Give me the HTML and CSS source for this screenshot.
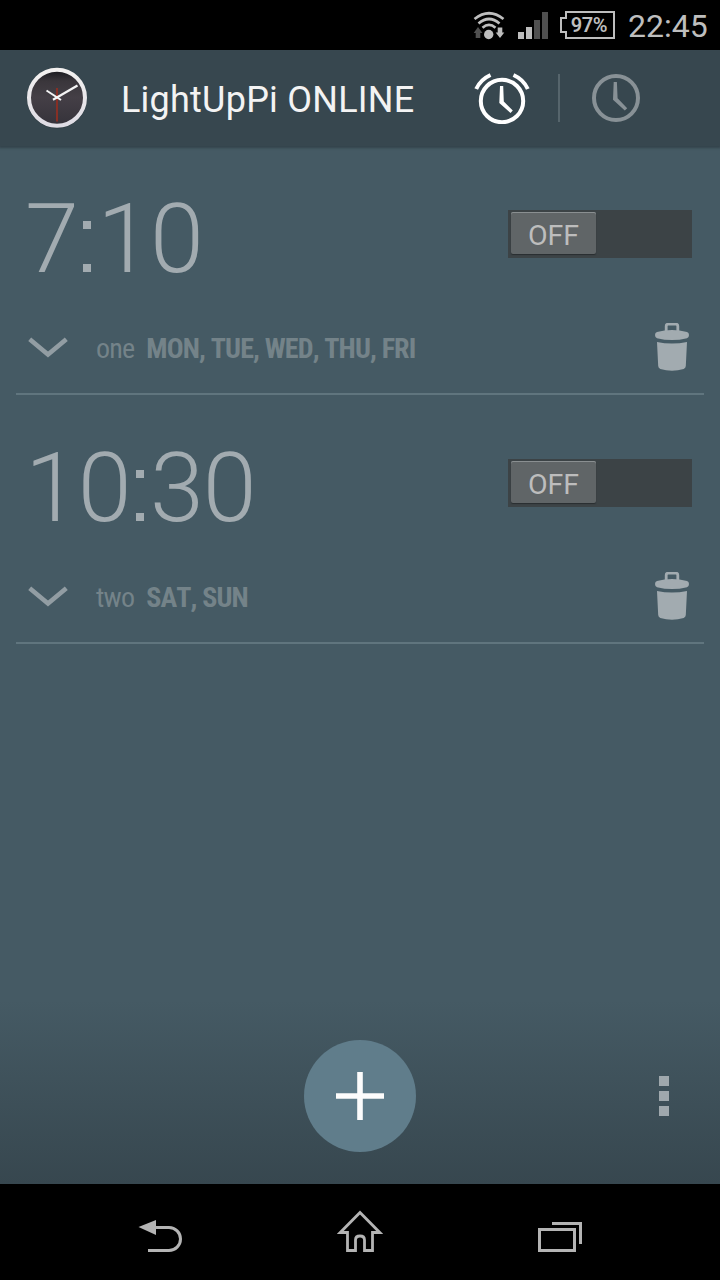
FILE: index.html
```html
<!DOCTYPE html>
<html lang="en">
<head>
<meta charset="utf-8">
<title>LightUpPi</title>
<link rel="stylesheet" href="styles.css">
</head>
<body>
<div class="screen">
  <div class="status">
    <svg class="wifi" width="32" height="30" viewBox="0 0 32 30">
      <g fill="none" stroke="#bebebe" stroke-width="2.7">
        <path d="M1.500 8Q16 -3.500 30.500 8"/>
        <path d="M5.500 12.500Q16 3.500 26.500 12.500"/>
        <path d="M9.500 16.700Q16 11 22.500 16.700"/>
      </g>
      <circle cx="15.700" cy="23.500" r="4.700" fill="#bebebe"/>
      <path d="M5 16 9.500 22H7.300V27H2.700V22H.700z" fill="#505050"/>
      <path d="M24.700 16.500H29.300V21.500H31.300L27 27 22.700 21.500H24.700z" fill="#bebebe"/>
    </svg>
    <svg class="signal" width="30" height="28" viewBox="0 0 30 28">
      <path d="M0 20h6v7H0zM8 15h6v12H8z" fill="#bebebe"/>
      <path d="M16 8h6v19h-6zM24 0h6v27h-6z" fill="#505050"/>
    </svg>
    <div class="battery">
      <svg width="55" height="28" viewBox="0 0 55 28"><path d="M6 1H54V27H6V21H1V7H6z" fill="none" stroke="#bebebe" stroke-width="2"/></svg>
      <span class="percent">97%</span>
    </div>
    <span class="time">22:45</span>
  </div>

  <div class="header">
    <svg class="logo" width="64" height="64" viewBox="0 0 64 64">
      <defs>
        <linearGradient id="face" x1="0" y1="0" x2="0" y2="1"><stop offset="0" stop-color="#17171c"/><stop offset=".2" stop-color="#3a363b"/><stop offset=".5" stop-color="#443f46"/><stop offset="1" stop-color="#35323a"/></linearGradient>
        <linearGradient id="rim" x1="0" y1="0" x2="0" y2="1"><stop offset="0" stop-color="#f3f1f0"/><stop offset="1" stop-color="#dedce4"/></linearGradient>
      </defs>
      <circle cx="32" cy="32.500" r="30" fill="#2c393f"/>
      <circle cx="32" cy="31.700" r="28" fill="url(#face)" stroke="url(#rim)" stroke-width="4"/>
      <path d="M32 22V55.500" stroke="#872f25" stroke-width="2"/>
      <path d="M21.500 24.500 36 34" stroke="#f5f5f5" stroke-width="2"/>
      <path d="M28 33.700 52.500 19.500" stroke="#f5f5f5" stroke-width="2.200"/>
    </svg>
    <h1 class="title">LightUpPi ONLINE</h1>
    <svg class="alarm-tab" width="56" height="52" viewBox="0 0 56 52">
      <g fill="none" stroke="#fff" stroke-width="4">
        <circle cx="28" cy="29" r="21.200"/>
        <path d="M2.200 17Q6.500 7.500 16.500 3M39.500 3Q49.500 7.500 53.800 17"/>
      </g>
      <path d="M26 14h3.200L29.800 29.500 38.800 38.500 36.500 41 25.300 31z" fill="#fff"/>
    </svg>
    <div class="separator"></div>
    <svg class="clock-tab" width="48" height="48" viewBox="0 0 48 48">
      <circle cx="24" cy="24" r="22" fill="none" stroke="#889196" stroke-width="4"/>
      <path d="M21.700 8h3.200L25.600 24.300 35.200 34.200 32.800 36.600 21 25.800z" fill="#889196"/>
    </svg>
  </div>

  <div class="alarms">
    <div class="alarm">
      <div class="alarm-top">
        <span class="alarm-time">7<span class="colon">:</span>10</span>
        <div class="switch"><span class="thumb">OFF</span></div>
      </div>
      <div class="alarm-info">
        <svg class="chevron" width="40" height="22" viewBox="0 0 40 22"><path d="M1.700 2.200 20 17.500 38.300 2.200" fill="none" stroke="#929da3" stroke-width="4.600"/></svg>
        <span class="name">one</span><span class="days">MON, TUE, WED, THU, FRI</span>
        <svg class="trash" width="34" height="48" viewBox="0 0 34 48"><path d="M11.200 9V3Q11.200 1.200 13 1.200H21Q22.800 1.200 22.800 3V9" fill="none" stroke="#a2abb0" stroke-width="2.800"/><path d="M0 12Q0 9.500 2 9Q17 5 32 9Q34 9.500 34 12Q34 14.700 32 15.200Q17 19 2 15.200Q0 14.700 0 12zM2 19Q17 22 32 19L30.800 43Q30.700 45 28.700 46Q17 49.300 5.300 46Q3.300 45 3.200 43z" fill="#a2abb0"/></svg>
      </div>
    </div>
    <div class="alarm">
      <div class="alarm-top">
        <span class="alarm-time">10<span class="colon">:</span>30</span>
        <div class="switch"><span class="thumb">OFF</span></div>
      </div>
      <div class="alarm-info">
        <svg class="chevron" width="40" height="22" viewBox="0 0 40 22"><path d="M1.700 2.200 20 17.500 38.300 2.200" fill="none" stroke="#929da3" stroke-width="4.600"/></svg>
        <span class="name">two</span><span class="days">SAT, SUN</span>
        <svg class="trash" width="34" height="48" viewBox="0 0 34 48"><path d="M11.200 9V3Q11.200 1.200 13 1.200H21Q22.800 1.200 22.800 3V9" fill="none" stroke="#a2abb0" stroke-width="2.800"/><path d="M0 12Q0 9.500 2 9Q17 5 32 9Q34 9.500 34 12Q34 14.700 32 15.200Q17 19 2 15.200Q0 14.700 0 12zM2 19Q17 22 32 19L30.800 43Q30.700 45 28.700 46Q17 49.300 5.300 46Q3.300 45 3.200 43z" fill="#a2abb0"/></svg>
      </div>
    </div>
  </div>

  <div class="actions">
    <div class="add"><svg width="48" height="48" viewBox="0 0 48 48"><path d="M24 0V48M0 24H48" stroke="#fcfcfc" stroke-width="5.600"/></svg></div>
    <div class="more"><i class="dot"></i><i class="dot"></i><i class="dot"></i></div>
  </div>

  <div class="nav">
    <svg class="nav-back" width="46" height="34" viewBox="0 0 46 34"><path d="M16 8.500H31A11.500 11.500 0 0 1 31 31.500H10" fill="none" stroke="#b4b4b4" stroke-width="3"/><path d="M.500 8 18 1V16z" fill="#b4b4b4"/></svg>
    <svg class="nav-home" width="46" height="44" viewBox="0 0 46 44"><path d="M23 2.500 42.700 22.500H35.500V40.500H27.500V30Q27.500 26 23 26Q18.500 26 18.500 30V40.500H10.500V22.500H3.300z" fill="none" stroke="#b4b4b4" stroke-width="2.800"/></svg>
    <svg class="nav-recent" width="44" height="30" viewBox="0 0 44 30"><path d="M1.500 7.500H36.500V28.500H1.500zM14 1.500H42.500V22" fill="none" stroke="#b4b4b4" stroke-width="3"/></svg>
  </div>
</div>
</body>
</html>
```
FILE: styles.css
```css
body {
  margin: 0;
  font-family: Roboto, "Liberation Sans", sans-serif;
}
svg { display: block; flex: none; }
.screen {
  width: 720px;
  height: 1280px;
  display: flex;
  flex-direction: column;
  background: #455a64;
  overflow: hidden;
}
.status {
  height: 50px;
  box-sizing: border-box;
  padding: 11px 12px 0 473px;
  display: flex;
  align-items: flex-start;
  background: #000;
  color: #bebebe;
  position: relative;
  z-index: 1;
}
.signal { margin: 1px 0 0 13px; }
.battery { position: relative; margin-left: 12px; }
.percent {
  position: absolute;
  left: 6px;
  top: 0;
  width: 46px;
  line-height: 28px;
  text-align: center;
  font-size: 20px;
  font-weight: 600;
  letter-spacing: -0.4px;
}
.time {
  margin-left: 13px;
  font-size: 32px;
  line-height: 31px;
}
.header {
  height: 96px;
  display: flex;
  align-items: center;
  padding-left: 25px;
  background: #37474f;
  box-shadow: 0 1px 2px 1px #34444c;
}
.title {
  margin: 4px 0 0 32px;
  width: 353px;
  color: #f3f3f3;
  font-size: 36px;
  font-weight: 400;
  line-height: 48px;
  letter-spacing: 0.23px;
  white-space: nowrap;
}
.separator {
  width: 2px;
  height: 48px;
  margin: 0 32px 0 28px;
  background: #56656c;
}
.alarm {
  height: 249px;
  box-sizing: border-box;
  margin: 0 16px;
  padding: 0 12px 0 8px;
  border-bottom: 2px solid #60757e;
}
.alarm-top {
  height: 176px;
  display: flex;
  align-items: center;
  justify-content: space-between;
}
.alarm-time {
  margin: 10px 0 0 1px;
  color: #a2abb0;
  font-size: 97px;
  font-weight: 300;
  line-height: 112px;
  letter-spacing: -1px;
}
.colon {
  color: transparent;
  background:
    linear-gradient(#a2abb0, #a2abb0) 5px 39px / 8px 8px no-repeat,
    linear-gradient(#a2abb0, #a2abb0) 5px 82px / 8px 8px no-repeat;
}
.switch {
  width: 184px;
  height: 48px;
  box-sizing: border-box;
  padding: 2px 3px;
  background: #3c4346;
}
.thumb {
  display: block;
  width: 85px;
  height: 42px;
  border-radius: 2px;
  background: #606567;
  box-shadow: inset 0 1px 0 #8a8f91, 0 1px 1px #292e30;
  color: #bdbdbd;
  font-size: 28.5px;
  line-height: 47px;
  text-align: center;
}
.alarm-info {
  height: 50px;
  display: flex;
  align-items: center;
  padding-left: 4px;
  color: #748389;
  font-size: 28px;
  font-stretch: 75%;
  font-kerning: none;
  letter-spacing: -0.8px;
  white-space: nowrap;
}
.name { margin: 3px 12px 0 28px; }
.days { margin-top: 3px; font-weight: 700; letter-spacing: -0.85px; }
.chevron { margin-top: 1px; }
.trash { margin: -1px 3px 0 auto; }
.actions {
  position: relative;
  height: 184px;
  margin-top: auto;
  display: flex;
  justify-content: center;
  align-items: flex-end;
  background: linear-gradient(#455a64, #37474f);
}
.add {
  width: 112px;
  height: 112px;
  margin-bottom: 32px;
  display: flex;
  align-items: center;
  justify-content: center;
  border-radius: 50%;
  background: #607d8b;
}
.more {
  position: absolute;
  right: 51px;
  bottom: 68px;
  display: grid;
  gap: 5px;
}
.dot { width: 10px; height: 10px; background: #9fa8ad; }
.nav {
  height: 96px;
  box-sizing: border-box;
  padding: 24px 138px 0;
  display: flex;
  justify-content: space-between;
  background: #000;
}
.nav-back { margin-top: 11px; }
.nav-home { margin: 2px 0 0 -3px; }
.nav-recent { margin-top: 14px; }
```
